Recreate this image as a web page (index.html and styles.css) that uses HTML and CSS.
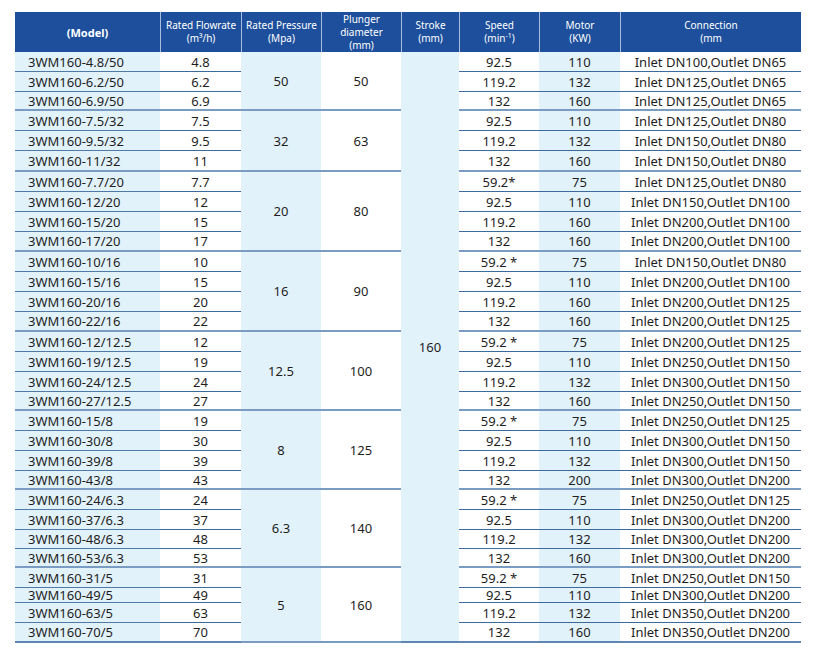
FILE: index.html
```html
<!DOCTYPE html>
<html>
<head>
<meta charset="utf-8">
<link rel="stylesheet" href="styles.css">
</head>
<body>
<table class="spec">
  <colgroup>
    <col class="c-model"><col class="c-flow"><col class="c-press"><col class="c-plung"><col class="c-stroke"><col class="c-speed"><col class="c-motor"><col class="c-conn">
  </colgroup>
  <thead>
    <tr>
      <th class="h-model">(Model)</th>
      <th>Rated Flowrate<br>(m³/h)</th>
      <th>Rated Pressure<br>(Mpa)</th>
      <th>Plunger<br>diameter<br>(mm)</th>
      <th>Stroke<br>(mm)</th>
      <th>Speed<br>(min<sup>-1</sup>)</th>
      <th>Motor<br>(KW)</th>
      <th>Connection<br>(mm</th>
    </tr>
  </thead>
  <tbody>
    <tr><td class="model">3WM160-4.8/50</td><td class="w">4.8</td><td class="b grp" rowspan="3">50</td><td class="w grp" rowspan="3">50</td><td class="b grp stroke" rowspan="30">160</td><td class="w">92.5</td><td class="b">110</td><td class="w">Inlet DN100,Outlet DN65</td></tr>
    <tr><td class="model">3WM160-6.2/50</td><td class="w">6.2</td><td class="w">119.2</td><td class="b">132</td><td class="w">Inlet DN125,Outlet DN65</td></tr>
    <tr class="end h19"><td class="model">3WM160-6.9/50</td><td class="w">6.9</td><td class="w">132</td><td class="b">160</td><td class="w">Inlet DN125,Outlet DN65</td></tr>

    <tr><td class="model">3WM160-7.5/32</td><td class="w">7.5</td><td class="b grp" rowspan="3">32</td><td class="w grp" rowspan="3">63</td><td class="w">92.5</td><td class="b">110</td><td class="w">Inlet DN125,Outlet DN80</td></tr>
    <tr><td class="model">3WM160-9.5/32</td><td class="w">9.5</td><td class="w">119.2</td><td class="b">132</td><td class="w">Inlet DN150,Outlet DN80</td></tr>
    <tr class="end h21"><td class="model">3WM160-11/32</td><td class="w">11</td><td class="w">132</td><td class="b">160</td><td class="w">Inlet DN150,Outlet DN80</td></tr>

    <tr><td class="model">3WM160-7.7/20</td><td class="w">7.7</td><td class="b grp" rowspan="4">20</td><td class="w grp" rowspan="4">80</td><td class="w">59.2*</td><td class="b">75</td><td class="w">Inlet DN125,Outlet DN80</td></tr>
    <tr><td class="model">3WM160-12/20</td><td class="w">12</td><td class="w">92.5</td><td class="b">110</td><td class="w">Inlet DN150,Outlet DN100</td></tr>
    <tr><td class="model">3WM160-15/20</td><td class="w">15</td><td class="w">119.2</td><td class="b">160</td><td class="w">Inlet DN200,Outlet DN100</td></tr>
    <tr class="end"><td class="model">3WM160-17/20</td><td class="w">17</td><td class="w">132</td><td class="b">160</td><td class="w">Inlet DN200,Outlet DN100</td></tr>

    <tr><td class="model">3WM160-10/16</td><td class="w">10</td><td class="b grp" rowspan="4">16</td><td class="w grp" rowspan="4">90</td><td class="w">59.2 *</td><td class="b">75</td><td class="w">Inlet DN150,Outlet DN80</td></tr>
    <tr><td class="model">3WM160-15/16</td><td class="w">15</td><td class="w">92.5</td><td class="b">110</td><td class="w">Inlet DN200,Outlet DN100</td></tr>
    <tr><td class="model">3WM160-20/16</td><td class="w">20</td><td class="w">119.2</td><td class="b">160</td><td class="w">Inlet DN200,Outlet DN125</td></tr>
    <tr class="end"><td class="model">3WM160-22/16</td><td class="w">22</td><td class="w">132</td><td class="b">160</td><td class="w">Inlet DN200,Outlet DN125</td></tr>

    <tr><td class="model">3WM160-12/12.5</td><td class="w">12</td><td class="b grp" rowspan="4">12.5</td><td class="w grp" rowspan="4">100</td><td class="w">59.2 *</td><td class="b">75</td><td class="w">Inlet DN200,Outlet DN125</td></tr>
    <tr><td class="model">3WM160-19/12.5</td><td class="w">19</td><td class="w">92.5</td><td class="b">110</td><td class="w">Inlet DN250,Outlet DN150</td></tr>
    <tr><td class="model">3WM160-24/12.5</td><td class="w">24</td><td class="w">119.2</td><td class="b">132</td><td class="w">Inlet DN300,Outlet DN150</td></tr>
    <tr class="end h19"><td class="model">3WM160-27/12.5</td><td class="w">27</td><td class="w">132</td><td class="b">160</td><td class="w">Inlet DN250,Outlet DN150</td></tr>

    <tr><td class="model">3WM160-15/8</td><td class="w">19</td><td class="b grp" rowspan="4">8</td><td class="w grp" rowspan="4">125</td><td class="w">59.2 *</td><td class="b">75</td><td class="w">Inlet DN250,Outlet DN125</td></tr>
    <tr><td class="model">3WM160-30/8</td><td class="w">30</td><td class="w">92.5</td><td class="b">110</td><td class="w">Inlet DN300,Outlet DN150</td></tr>
    <tr><td class="model">3WM160-39/8</td><td class="w">39</td><td class="w">119.2</td><td class="b">132</td><td class="w">Inlet DN300,Outlet DN150</td></tr>
    <tr class="end h19"><td class="model">3WM160-43/8</td><td class="w">43</td><td class="w">132</td><td class="b">200</td><td class="w">Inlet DN300,Outlet DN200</td></tr>

    <tr><td class="model">3WM160-24/6.3</td><td class="w">24</td><td class="b grp" rowspan="4">6.3</td><td class="w grp" rowspan="4">140</td><td class="w">59.2 *</td><td class="b">75</td><td class="w">Inlet DN250,Outlet DN125</td></tr>
    <tr><td class="model">3WM160-37/6.3</td><td class="w">37</td><td class="w">92.5</td><td class="b">110</td><td class="w">Inlet DN300,Outlet DN200</td></tr>
    <tr class="h19"><td class="model">3WM160-48/6.3</td><td class="w">48</td><td class="w">119.2</td><td class="b">132</td><td class="w">Inlet DN300,Outlet DN200</td></tr>
    <tr class="end h19"><td class="model">3WM160-53/6.3</td><td class="w">53</td><td class="w">132</td><td class="b">160</td><td class="w">Inlet DN300,Outlet DN200</td></tr>

    <tr><td class="model">3WM160-31/5</td><td class="w">31</td><td class="b grp" rowspan="4">5</td><td class="w grp" rowspan="4">160</td><td class="w">59.2 *</td><td class="b">75</td><td class="w">Inlet DN250,Outlet DN150</td></tr>
    <tr class="h15"><td class="model">3WM160-49/5</td><td class="w">49</td><td class="w">92.5</td><td class="b">110</td><td class="w">Inlet DN300,Outlet DN200</td></tr>
    <tr><td class="model">3WM160-63/5</td><td class="w">63</td><td class="w">119.2</td><td class="b">132</td><td class="w">Inlet DN350,Outlet DN200</td></tr>
    <tr class="end"><td class="model">3WM160-70/5</td><td class="w">70</td><td class="w">132</td><td class="b">160</td><td class="w">Inlet DN350,Outlet DN200</td></tr>
  </tbody>
</table>
</body>
</html>
```

FILE: styles.css
```css
html, body {
  margin: 0;
  padding: 0;
  background: #ffffff;
}
body {
  padding: 12px 16px 0 15px;
  font-family: "Noto Sans", "Liberation Sans", sans-serif;
  color: #1e1e1e;
}
.spec {
  border-collapse: separate;
  border-spacing: 0;
  table-layout: fixed;
  width: 786px;
}
.c-model { width: 145px; }
.c-flow { width: 81px; }
.c-press { width: 80px; }
.c-plung { width: 80px; }
.c-stroke { width: 58px; }
.c-speed { width: 80px; }
.c-motor { width: 81px; }
.c-conn { width: 181px; }

.spec thead tr { height: 40px; }
.spec th {
  background: #1d4f9c;
  color: #ffffff;
  font-weight: 400;
  font-size: 10px;
  line-height: 13px;
  padding: 0;
  text-align: center;
  vertical-align: middle;
  border-left: 1px solid #a9bedc;
}
.spec th:first-child { border-left: none; }
.spec th.h-model {
  font-size: 11px;
  font-weight: 700;
}
.spec th sup {
  font-size: 7px;
  line-height: 0;
  vertical-align: 4px;
}

.spec tbody tr { height: 20px; }
.spec tbody tr.h19 { height: 19px; }
.spec tbody tr.h21 { height: 21px; }
.spec tbody tr.h15 { height: 15px; }

.spec td {
  font-size: 13px;
  line-height: 14px;
  padding: 0;
  text-align: center;
  vertical-align: middle;
  white-space: nowrap;
  border-bottom: 1px solid #3d6a9c;
}
.spec td.b { background: #e2f2fb; }
.spec td.w { background: #ffffff; }
.spec td.model {
  background: #e2f2fb;
  text-align: left;
  padding-left: 13px;
  border-bottom-color: #4f7aa8;
}
.spec tr.end td,
.spec td.grp {
  border-bottom: 2px solid #7a9bc2;
}
.spec tr:last-child td,
.spec td.stroke {
  border-bottom: 2px solid #5f86b4;
}
```
